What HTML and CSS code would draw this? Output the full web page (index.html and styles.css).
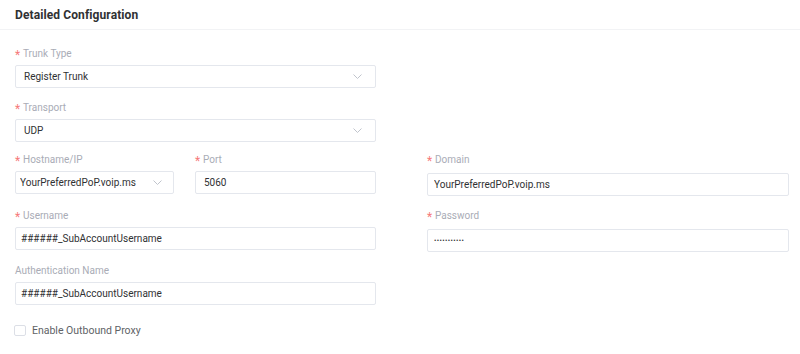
FILE: index.html
```html
<!DOCTYPE html>
<html lang="en">
<head>
<meta charset="utf-8">
<title>Detailed Configuration</title>
<link rel="stylesheet" href="styles.css">
</head>
<body>
<section class="panel">
  <header class="panel-head">
    <h2 class="panel-title">Detailed Configuration</h2>
  </header>
  <div class="form">
    <div class="field span2">
      <div class="label"><span class="req">*</span>Trunk Type</div>
      <div class="control select">
        <span class="value">Register Trunk</span>
        <svg class="chev" width="9" height="5" viewBox="0 0 9 5"><polyline points="0.5,0.5 4.5,4.5 8.5,0.5" fill="none" stroke="#c0c4cc" stroke-width="1"/></svg>
      </div>
    </div>
    <div class="field span2 mb9">
      <div class="label"><span class="req">*</span>Transport</div>
      <div class="control select">
        <span class="value">UDP</span>
        <svg class="chev" width="9" height="5" viewBox="0 0 9 5"><polyline points="0.5,0.5 4.5,4.5 8.5,0.5" fill="none" stroke="#c0c4cc" stroke-width="1"/></svg>
      </div>
    </div>
    <div class="field c1 mb13">
      <div class="label"><span class="req">*</span>Hostname/IP</div>
      <div class="control select tight">
        <span class="value">YourPreferredPoP.voip.ms</span>
        <svg class="chev" width="9" height="5" viewBox="0 0 9 5"><polyline points="0.5,0.5 4.5,4.5 8.5,0.5" fill="none" stroke="#c0c4cc" stroke-width="1"/></svg>
      </div>
    </div>
    <div class="field c2 mb13">
      <div class="label"><span class="req">*</span>Port</div>
      <div class="control"><span class="value">5060</span></div>
    </div>
    <div class="field c3 mb11">
      <div class="label"><span class="req">*</span>Domain</div>
      <div class="control pad7"><span class="value">YourPreferredPoP.voip.ms</span></div>
    </div>
    <div class="field span2 mb12">
      <div class="label"><span class="req">*</span>Username</div>
      <div class="control pad6"><span class="value">######_SubAccountUsername</span></div>
    </div>
    <div class="field c3 mb10">
      <div class="label"><span class="req">*</span>Password</div>
      <div class="control pad7"><span class="value dots">•••••••••••</span></div>
    </div>
    <div class="field span2">
      <div class="label">Authentication Name</div>
      <div class="control pad6"><span class="value">######_SubAccountUsername</span></div>
    </div>
    <label class="check span2">
      <span class="box"></span>
      <span class="check-text">Enable Outbound Proxy</span>
    </label>
  </div>
</section>
</body>
</html>
```
FILE: styles.css
```css
* { box-sizing: border-box; }
html, body { margin: 0; padding: 0; background: #fff; }
body {
  font-family: Roboto, "Liberation Sans", Arial, sans-serif;
  color: #303133;
  width: 800px;
}
.panel-head {
  height: 30px;
  border-bottom: 1px solid #f2f3f5;
  padding: 0 15px;
  display: flex;
  align-items: center;
}
.panel-title {
  margin: 0;
  font-size: 12px;
  font-weight: 700;
  color: #303133;
  letter-spacing: 0.1px;
}
.form {
  padding: 15px 11px 0 15px;
  display: grid;
  grid-template-columns: 159px 181px 1fr;
  column-gap: 21px;
  align-items: start;
}
.field { margin-bottom: 11px; }
.mb9 { margin-bottom: 9px; }
.mb10 { margin-bottom: 10px; }
.mb11 { margin-bottom: 11px; }
.mb12 { margin-bottom: 12px; }
.mb13 { margin-bottom: 13px; }
.span2 { grid-column: 1 / 3; }
.c1 { grid-column: 1; }
.c2 { grid-column: 2; }
.c3 { grid-column: 3; padding-left: 30px; }
.label {
  font-size: 10px;
  line-height: 16px;
  height: 17px;
  padding-top: 1px;
  color: #a9acb6;
  margin-bottom: 3px;
  display: flex;
  align-items: center;
}
.c3 .label { margin-bottom: 5px; }
.req {
  color: #f67a7a;
  font-size: 12px;
  font-weight: 400;
  width: 8px;
  display: inline-block;
  position: relative;
  top: 1px;
}
.control {
  height: 23px;
  border: 1px solid #e4e7ed;
  border-radius: 2px;
  background: #fff;
  display: flex;
  align-items: center;
  padding: 0 8px;
  font-size: 10px;
  color: #303133;
}
.control .value { flex: 1; white-space: nowrap; overflow: hidden; }
.select { padding-right: 13px; }
.select.tight { padding-left: 4px; padding-right: 11px; }
.pad6 { padding-left: 5px; }
.pad7 { padding-left: 6px; }
.chev { display: block; flex: none; }
.dots { font-size: 7px; letter-spacing: 0.4px; color: #303133; }
.check {
  display: flex;
  align-items: center;
  margin-top: 8px;
  height: 12px;
}
.box {
  width: 12px;
  height: 11px;
  border: 1px solid #dcdfe6;
  border-radius: 2px;
  background: #fff;
  margin-left: -1px;
  margin-right: 6px;
}
.check-text {
  font-size: 10.5px;
  color: #606266;
}
```
